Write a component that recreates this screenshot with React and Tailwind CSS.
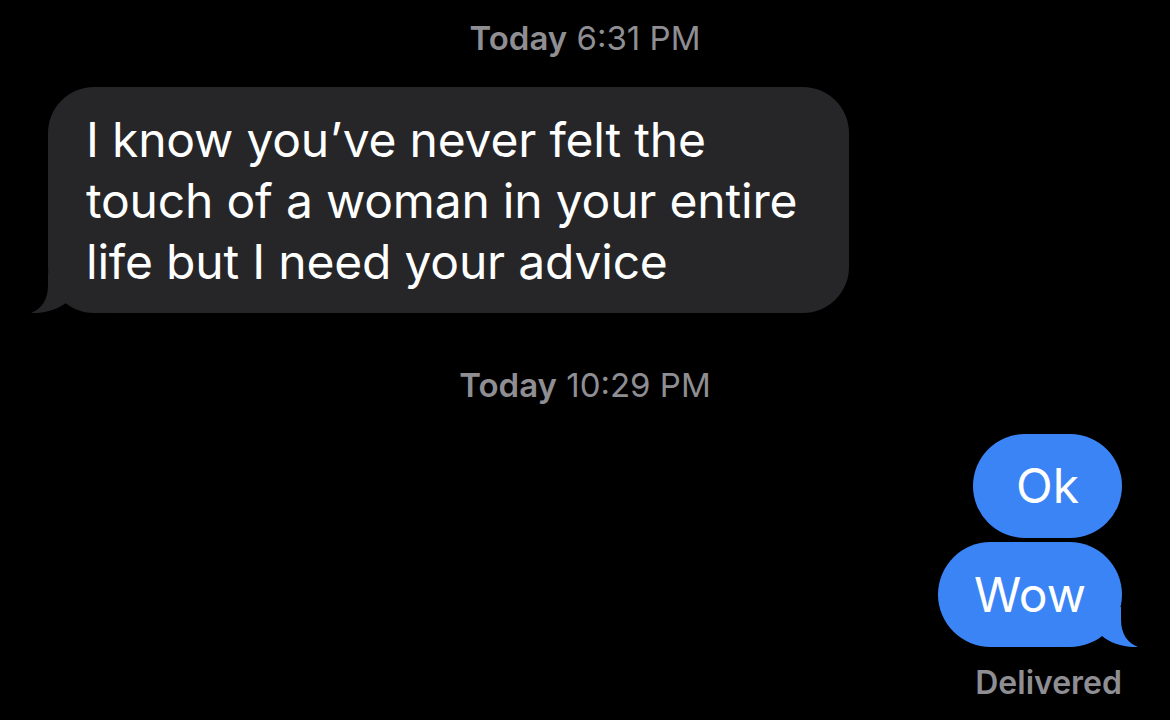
const font = { fontFamily: 'Inter, "Noto Sans", sans-serif' }

function TailLeft({ color }) {
  return (
    <svg className="absolute -left-[17px] bottom-0" width="80" height="40" viewBox="0 0 80 40">
      <path d="M17 0 L17 12 C17 28 10 36 0 40 C14 40.5 28 36 36 29 C44 36 58 40 80 40 L80 0 Z" fill={color} />
    </svg>
  )
}

function TailRight({ color }) {
  return (
    <svg className="absolute -right-[16px] bottom-0" width="80" height="40" viewBox="0 0 80 40">
      <path d="M63 0 L63 12 C63 28 70 36 80 40 C66 40.5 52 36 44 29 C36 36 22 40 0 40 L0 0 Z" fill={color} />
    </svg>
  )
}

function Stamp({ day, time }) {
  return (
    <div className="text-center text-[#8e8e93] text-[33px] leading-[40px]">
      <span className="font-semibold">{day}</span> {time}
    </div>
  )
}

export default function App() {
  return (
    <div className="w-[1170px] h-[720px] bg-black overflow-hidden flex flex-col pt-[18px]" style={font}>
      <Stamp day="Today" time="6:31 PM" />

      <div className="flex pl-[48px] mt-[29px]">
        <div className="relative w-[801px] bg-[#262628] rounded-[46px] pl-[38px] pt-[22px] pb-[21px] text-white text-[48px] leading-[61px] tracking-[-0.2px]">
          <TailLeft color="#262628" />
          <p className="relative">
            I know you’ve never felt the<br />
            touch of a woman in your entire<br />
            life but I need your advice
          </p>
        </div>
      </div>

      <div className="mt-[52px]">
        <Stamp day="Today" time="10:29 PM" />
      </div>

      <div className="flex flex-col items-end pr-[48px] mt-[29px] gap-[4px]">
        <div className="w-[149px] flex justify-center bg-[#3b84f5] rounded-full py-[21px] text-white text-[48px] leading-[62px]">
          Ok
        </div>
        <div className="relative w-[184px] flex justify-center bg-[#3b84f5] rounded-full py-[21px] text-white text-[48px] leading-[63px]">
          <TailRight color="#3b84f5" />
          <span className="relative">Wow</span>
        </div>
        <div className="mt-[14px] text-[#8e8e93] text-[32px] leading-[36px] font-semibold">
          Delivered
        </div>
      </div>
    </div>
  )
}
